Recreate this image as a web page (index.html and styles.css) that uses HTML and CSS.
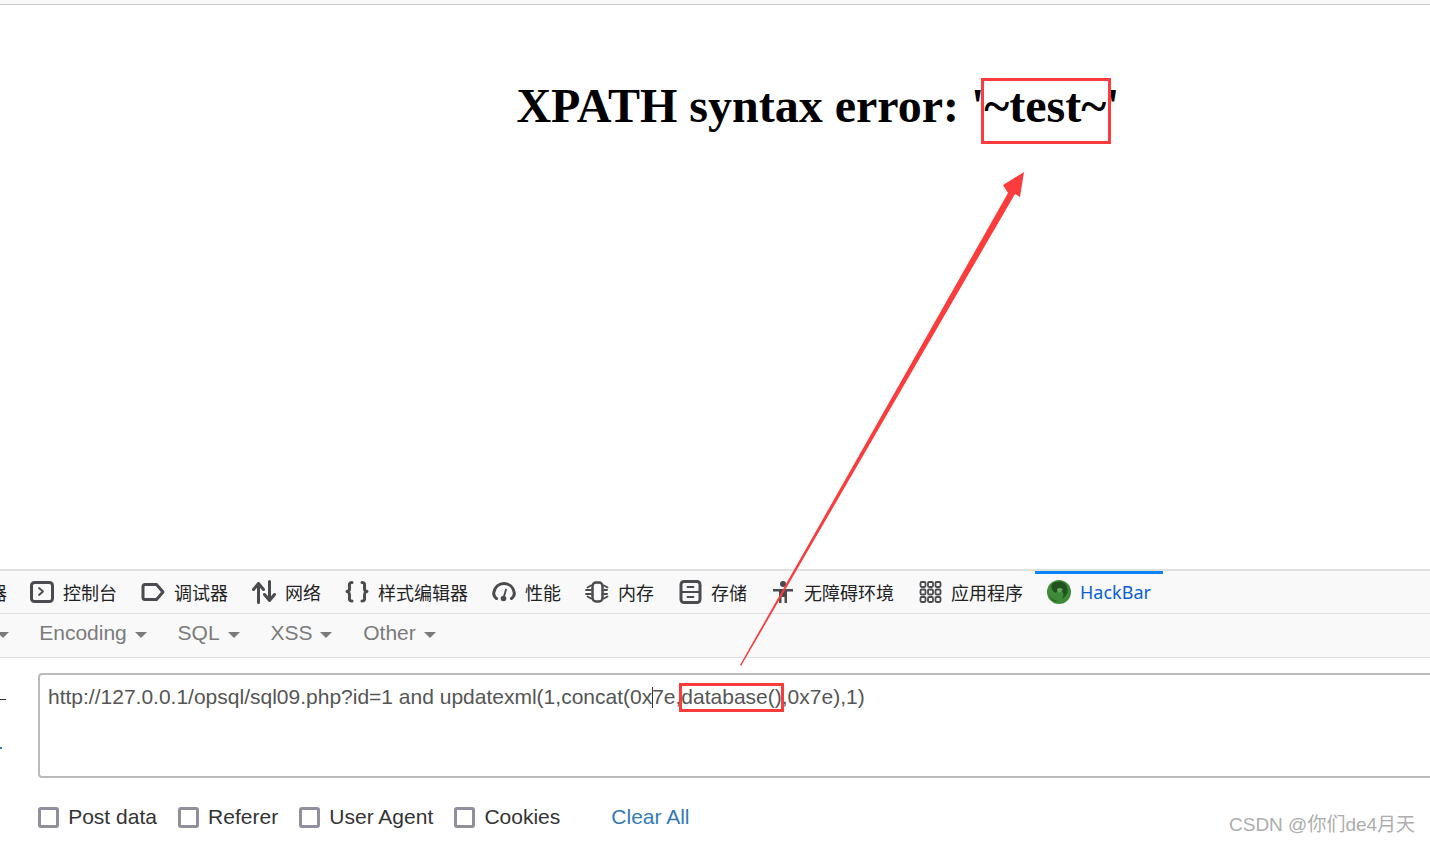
FILE: index.html
```html
<!DOCTYPE html>
<html lang="zh">
<head>
<meta charset="utf-8">
<title>XPATH syntax error</title>
<link rel="stylesheet" href="styles.css">
</head>
<body>
<div class="screen">
  <div class="browser-top"></div>
  <main class="page">
    <h1 class="error">XPATH syntax error: '~test~'</h1>
  </main>
  <section class="devtools">
    <nav class="tabs">
      <div class="tab clipped"><span>查看器</span></div>
      <div class="tab"><svg class="icon" viewBox="0 0 24 24"><rect x="1.500" y="2.500" width="21" height="19" rx="3" class="st"/><path d="M9 8l4 3.500-4 3.500" class="st thin"/></svg><span>控制台</span></div>
      <div class="tab"><svg class="icon" viewBox="0 0 24 24"><path d="M4 4.500h11.500l6.500 7.500-6.500 7.500H4a2 2 0 0 1-2-2v-11a2 2 0 0 1 2-2z" class="st"/></svg><span>调试器</span></div>
      <div class="tab"><svg class="icon" viewBox="0 0 24 24"><path d="M6.500 22.500V3.500M1.500 9.500l5-6 5 6M17.500 1.500v19M12.500 14.500l5 6 5-6" class="st"/></svg><span>网络</span></div>
      <div class="tab"><svg class="icon" viewBox="0 0 24 24"><path d="M7 2.500C3.500 2.500 4.500 5 4.500 7.500S4.500 11 2 11.500c2.500.5 2.500 2 2.500 4.500s-1 5 2.500 5M17 2.500c3.500 0 2.500 2.500 2.500 5s0 3.500 2.500 4c-2.500.5-2.500 2-2.500 4.500s1 5-2.500 5" class="st"/></svg><span>样式编辑器</span></div>
      <div class="tab"><svg class="icon" viewBox="0 0 24 24"><path d="M4.500 18.500C2 16.500 1.500 14.500 1.800 12.500 2.800 7 7 3.500 12 3.500s9.200 3.500 10.200 9c.3 2 0 4-2.700 6" class="st"/><path d="M14 9.500l-2.300 8" class="st thin"/><circle cx="11.500" cy="18.500" r="2.800" class="fill"/></svg><span>性能</span></div>
      <div class="tab"><svg class="icon" viewBox="0 0 24 24"><rect x="7.500" y="2.500" width="10" height="19" rx="3.500" class="st mid"/><path d="M6 5.500L2.500 7.500M6 10H1M6 14H1M6 18.500l-3.500-2M19 5.500l3.500 2M19 10h3M19 14h3M19 18.500l3.500-2" class="st thin"/></svg><span>内存</span></div>
      <div class="tab narrow"><svg class="icon" viewBox="0 0 24 24"><rect x="2" y="1.500" width="19" height="21" rx="3" class="st"/><path d="M2 12h19M8.500 7h6M8.500 17h6" class="st thin"/></svg><span>存储</span></div>
      <div class="tab narrow-gap"><svg class="icon" viewBox="0 0 24 24"><circle cx="11" cy="4" r="3" class="fill"/><path d="M1 9h20v2.500h-6V23h-2.500v-6h-3v6H7V11.500H1z" class="fill"/></svg><span>无障碍环境</span></div>
      <div class="tab narrow-gap"><svg class="icon" viewBox="0 0 24 24"><g class="st thin"><rect x="1.500" y="2" width="5" height="5" rx="1.200"/><rect x="9" y="2" width="5" height="5" rx="1.200"/><rect x="16.500" y="2" width="5" height="5" rx="1.200"/><rect x="1.500" y="9.500" width="5" height="5" rx="1.200"/><rect x="9" y="9.500" width="5" height="5" rx="1.200"/><rect x="16.500" y="9.500" width="5" height="5" rx="1.200"/><rect x="1.500" y="17" width="5" height="5" rx="1.200"/><rect x="9" y="17" width="5" height="5" rx="1.200"/><rect x="16.500" y="17" width="5" height="5" rx="1.200"/></g></svg><span>应用程序</span></div>
      <div class="tab active"><svg class="icon" viewBox="0 0 24 24"><circle cx="12" cy="12" r="12" fill="#3f8a38"/><path d="M5 4c5-4 13-3 15 3 2 5-1 10-5 12 2-3 2-6 0-8-3-2-5 0-6 2-3-1-6-5-4-9z" fill="#1f521f"/><path d="M10 9c2-2 5-1 6 1-1 1-3 1-4 3-1-1-2-2-2-4z" fill="#6aa75e"/><path d="M2 14c2 4 6 7 10 7-4 2-8 0-10-7z" fill="#2a6a2a"/></svg><span>HackBar</span></div>
    </nav>
    <div class="toolbar">
      <div class="menu clipped-menu"><i class="caret"></i></div>
      <div class="menu">Encoding<i class="caret"></i></div>
      <div class="menu">SQL<i class="caret"></i></div>
      <div class="menu">XSS<i class="caret"></i></div>
      <div class="menu">Other<i class="caret"></i></div>
    </div>
    <div class="panel">
      <aside class="side">
        <span class="dash"></span>
        <span class="dot"></span>
      </aside>
      <div class="form">
        <div class="url">http://127.0.0.1/opsql/sql09.php?id=1 and updatexml(1,concat(0x<span class="cursor"></span>7e,database(),0x7e),1)</div>
        <div class="options">
          <label class="check"><i class="box"></i>Post data</label>
          <label class="check"><i class="box"></i>Referer</label>
          <label class="check"><i class="box"></i>User Agent</label>
          <label class="check"><i class="box"></i>Cookies</label>
          <a class="clear">Clear All</a>
        </div>
      </div>
    </div>
  </section>
  <div class="mark box-test"></div>
  <div class="mark box-db"></div>
  <svg class="arrow" viewBox="0 0 1430 844"><polygon points="740,665 1008,193 1003,185 1024,172 1020,197 1015,194 741,666"/></svg>
  <div class="watermark">CSDN @你们de4月天</div>
</div>
</body>
</html>
```
FILE: styles.css
```css
* { box-sizing: border-box; }
html, body { margin: 0; padding: 0; background: #fff; }
.screen { position: relative; width: 1430px; height: 844px; overflow: hidden; display: flex; flex-direction: column; font-family: "Liberation Sans", Arial, sans-serif; }
.browser-top { height: 5px; flex: none; background: #f9f9fa; border-bottom: 1px solid #c8c8c8; }
.page { height: 564px; flex: none; background: #fff; }
.error { margin: 0; padding: 67px 0 0 206px; text-align: center; font: bold 48px/67px "Liberation Serif", "Times New Roman", serif; color: #000; }
.devtools { flex: 1; display: flex; flex-direction: column; background: #fff; }
.tabs { height: 45px; flex: none; display: flex; background: #f9f9fa; border-top: 2px solid #e0e0e0; border-bottom: 1px solid #e0e0e2; font: 18px/1 "Noto Sans CJK SC", "Noto Sans", sans-serif; color: #222; }
.tab { display: flex; align-items: center; gap: 9px; padding: 0 12px 1px; height: 42px; position: relative; white-space: nowrap; }
.tab.clipped { margin-left: -47px; padding: 0 11px 1px 0; }
.tab.narrow { padding-left: 13px; padding-right: 13px; gap: 8px; }
.tab.narrow-gap { gap: 8px; padding-right: 13px; }
.tab.narrow-gap + .tab.narrow-gap { padding-right: 12px; }
.icon { width: 24px; height: 24px; flex: none; }
.st { fill: none; stroke: #4a4a4f; stroke-width: 3; stroke-linejoin: round; stroke-linecap: round; }
.st.mid { stroke-width: 2.500; }
.thin { stroke-width: 1.800; }
.fill { fill: #4a4a4f; }
.tab.active { color: #0a5fd6; font: 18px/1 "Noto Sans", sans-serif; width: 128px; }
.tab.active::before { content: ""; position: absolute; left: 0; right: 0; top: 0; height: 3px; background: #0a84ff; }
.toolbar { height: 44px; flex: none; display: flex; align-items: center; gap: 30.800px; background: #f9f9fa; border-bottom: 1px solid #e0e0e2; font-size: 21px; color: #7b7b7b; padding-bottom: 5px; margin-left: -2.600px; }
.menu { display: flex; align-items: center; gap: 8px; }
.clipped-menu { width: 11px; }
.caret { width: 0; height: 0; border-left: 6px solid transparent; border-right: 6px solid transparent; border-top: 6px solid #7b7b7b; margin-top: 3px; }
.panel { flex: 1; display: flex; }
.side { width: 38px; flex: none; display: flex; flex-direction: column; padding-top: 41px; gap: 47px; }
.dash { width: 6px; height: 1px; background: #333; }
.dot { width: 2px; height: 2px; background: #337ab7; }
.form { flex: 1; padding-top: 15px; min-width: 0; }
.url { width: 1500px; height: 105px; border: 2px solid #bbb; border-radius: 4px; padding: 9px 8px; font-size: 21px; line-height: 26px; color: #555; white-space: nowrap; }
.cursor { display: inline-block; width: 1px; height: 21px; background: #333; vertical-align: -4px; margin-right: -1px; }
.options { display: flex; align-items: center; margin-top: 27px; font-size: 21px; color: #333; }
.check { display: flex; align-items: center; gap: 9.200px; margin-right: 21px; }
.box { width: 21px; height: 21px; border: 3px solid #8f8f9d; border-radius: 3px; background: #fff; }
.clear { color: #337ab7; margin-left: 30px; }
.mark { position: absolute; border: 3px solid #fb3c3c; }
.box-test { left: 981px; top: 78px; width: 130px; height: 66px; }
.box-db { left: 679px; top: 683px; width: 105px; height: 29px; }
.arrow { position: absolute; left: 0; top: 0; width: 1430px; height: 844px; pointer-events: none; }
.arrow polygon { fill: #fb3c3c; }
.watermark { position: absolute; left: 1229px; top: 811px; font: 19px/28px "Liberation Sans", "Noto Sans CJK SC", sans-serif; color: #adadad; white-space: nowrap; }
```
